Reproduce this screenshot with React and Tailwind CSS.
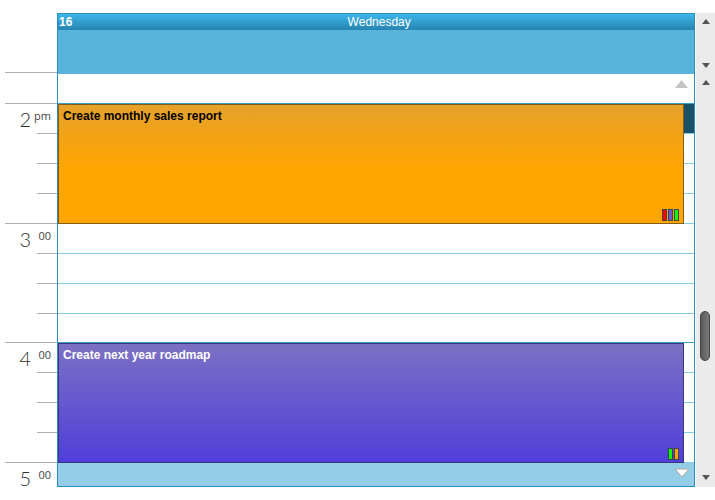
import React from 'react';

const slotHeights = [30, 30, 30, 30, 30, 30, 30, 29, 30, 30, 30, 30];

const labels = {
  0: { hour: '2', sup: 'pm' },
  4: { hour: '3', sup: '00' },
  8: { hour: '4', sup: '00' },
};

function Tri({ dir = 'up' }) {
  return (
    <svg width="8" height="5" viewBox="0 0 8 5">
      {dir === 'up' ? <polygon points="0,5 4,0 8,5" fill="#555" /> : <polygon points="0,0 8,0 4,5" fill="#555" />}
    </svg>
  );
}

function TimeLabel({ hour, sup }) {
  return (
    <div className="flex h-[29px] w-[51px] items-start justify-end">
      <span className="mt-[5px] text-[20px] leading-none font-light text-[#333]" style={{ fontFamily: 'Lato, "Open Sans", sans-serif' }}>
        {hour}
      </span>
      <span className="ml-[3px] mt-[6px] w-[17px] text-right text-[11px] leading-none text-[#444]" style={{ fontFamily: '"Open Sans", "Liberation Sans", sans-serif' }}>
        {sup}
      </span>
    </div>
  );
}

function Event({ top, title, bg, border, text, bars }) {
  return (
    <div
      className="absolute left-0 h-[120px] w-[626px] border"
      style={{ top, background: bg, borderColor: border }}
    >
      <div className={`pl-[4px] pt-[5px] text-[12px] leading-none font-bold ${text}`}>{title}</div>
      <div className="absolute bottom-[2px] right-[4px] flex gap-[1px]">
        {bars.map((c, i) => (
          <div key={i} className="h-[12px] w-[5px] border border-[#444]" style={{ background: c }} />
        ))}
      </div>
    </div>
  );
}

export default function App() {
  return (
    <div className="h-[500px] w-[715px] overflow-hidden bg-white pt-[13px]" style={{ fontFamily: '"Liberation Sans", Arial, sans-serif' }}>
      {/* all-day section */}
      <div className="flex h-[61px]">
        <div className="w-[57px] shrink-0">
          <div className="ml-[5px] h-[60px] w-[52px] border-b border-[#b0b0b0]" />
        </div>
        <div className="flex flex-1 flex-col border-x border-t border-[#2b8fc2]">
          <div className="flex h-[16px] items-center bg-gradient-to-b from-[#3cb6ea] to-[#2784b0] px-[1px] text-[12px] leading-none text-white">
            <span className="font-bold">16</span>
            <span className="flex-1 pr-[7px] text-center">Wednesday</span>
          </div>
          <div className="flex-1 bg-[#58b4da]" />
        </div>
        <div className="flex w-[20px] shrink-0 flex-col items-center justify-between border-l border-white bg-[#ebebeb] py-[6px]">
          <Tri dir="up" />
          <Tri dir="down" />
        </div>
      </div>

      {/* timeline */}
      <div className="flex h-[413px]">
        <div className="flex w-[57px] shrink-0 flex-col">
          <div className="ml-[5px] h-[30px] w-[52px] border-b border-[#b0b0b0]" />
          {slotHeights.map((h, i) => (
            <div key={i} className="flex flex-col items-end" style={{ height: h }}>
              <div className="flex-1 self-start">{labels[i] && <TimeLabel {...labels[i]} />}</div>
              <div className={(i + 1) % 4 === 0 ? 'h-px w-[52px] bg-[#b0b0b0]' : 'h-px w-[20px] bg-[#b0b0b0]'} />
            </div>
          ))}
          <div className="h-[24px]">
            <TimeLabel hour="5" sup="00" />
          </div>
        </div>

        <div className="relative flex flex-1 flex-col border-x border-b border-[#2b8fc2]">
          <div className="flex h-[29px] items-start justify-end pr-[6px] pt-[6px]">
            <svg width="13" height="8" viewBox="0 0 13 8">
              <polygon points="0,8 6.5,0 13,8" fill="#c4c4c4" />
            </svg>
          </div>
          <div className="h-px bg-[#3a9fcc]" />
          {slotHeights.map((h, i) => (
            <div key={i} className="flex flex-col" style={{ height: h }}>
              <div className="flex-1" />
              <div className={i === 7 ? 'h-px bg-[#3a9fcc]' : 'h-px bg-[#86cce6]'} />
            </div>
          ))}
          <div className="flex flex-1 items-start justify-end bg-[#93cde6] pr-[4px] pt-[5px]">
            <svg width="16" height="10" viewBox="0 0 16 10">
              <polygon points="1,1 15,1 8,9" fill="#fff" stroke="#a8a8a8" strokeWidth="1" />
            </svg>
          </div>

          <div className="absolute left-[626px] top-[30px] h-[29px] w-[10px] bg-[#1a5068]" />

          <Event
            top={30}
            title="Create monthly sales report"
            bg="linear-gradient(to bottom, #e6a22b 0%, #ffa500 55%, #ffa500 100%)"
            border="#8a5c10"
            text="text-black"
            bars={['#ff0000', '#6a5acd', '#00ff00']}
          />
          <Event
            top={269}
            title="Create next year roadmap"
            bg="linear-gradient(to bottom, #7c70c4 0%, #4f3fd9 100%)"
            border="#3b3680"
            text="text-white"
            bars={['#00ff00', '#ffa500']}
          />
        </div>

        <div className="relative flex w-[20px] shrink-0 flex-col items-center justify-between border-l border-white bg-[#ebebeb] pb-[7px] pt-[6px]">
          <Tri dir="up" />
          <Tri dir="down" />
          <div className="absolute left-[4px] top-[237px] h-[50px] w-[10px] rounded-full border border-[#444] bg-gradient-to-r from-[#5a5a5a] to-[#7a7a7a]" />
        </div>
      </div>
    </div>
  );
}
